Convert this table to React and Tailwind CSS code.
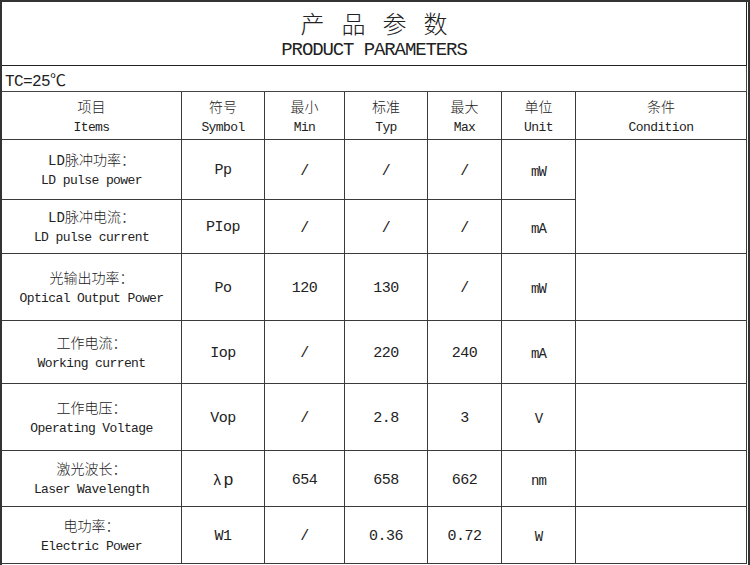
import React from "react";

const rows = [
	{ cn: "LD脉冲功率：", en: "LD pulse power", sym: "Pp", min: "/", typ: "/", max: "/", unit: "mW", h: "h-[60px]" },
	{ cn: "LD脉冲电流：", en: "LD pulse current", sym: "PIop", min: "/", typ: "/", max: "/", unit: "mA", h: "h-[54px]" },
	{ cn: "光输出功率：", en: "Optical Output Power", sym: "Po", min: "120", typ: "130", max: "/", unit: "mW", h: "h-[67px]" },
	{ cn: "工作电流：", en: "Working current", sym: "Iop", min: "/", typ: "220", max: "240", unit: "mA", h: "h-[63px]" },
	{ cn: "工作电压：", en: "Operating Voltage", sym: "Vop", min: "/", typ: "2.8", max: "3", unit: "V", h: "h-[67px]" },
	{ cn: "激光波长：", en: "Laser Wavelength", sym: "lambda", min: "654", typ: "658", max: "662", unit: "nm", h: "h-[56px]" },
	{ cn: "电功率：", en: "Electric Power", sym: "W1", min: "/", typ: "0.36", max: "0.72", unit: "W", h: "h-[57px]" },
];

const cell = "flex flex-col items-center justify-center border-r border-b border-[#3a3a3a] text-center";

const Symbol = ({ sym }) => {
	if (sym === "lambda") {
		return (
			<span className="flex items-baseline">
				<span className="text-[15px]">λ</span>
				<span className="font-['Liberation_Sans',sans-serif] text-[17px] ml-[2px]">p</span>
			</span>
		);
	}
	return <span className="text-[15px] tracking-[-0.5px]">{sym}</span>;
};

const App = () => {
	return (
		<div className="w-[750px] h-[565px] bg-white border-l-2 border-t-2 border-[#333] border-r-2 pr-px font-['Liberation_Mono','Noto_Sans_CJK_SC',monospace] text-[#222]">
			{/* title */}
			<div className="h-[64px] border-b border-r border-[#222] flex flex-col items-center justify-center pt-[3px]">
				<div className="flex gap-[17px] text-[24px] leading-[30px] font-['Noto_Sans_CJK_SC',sans-serif] font-light">
					<span>产</span>
					<span>品</span>
					<span>参</span>
					<span>数</span>
				</div>
				<div className="text-[19px] leading-[24px] tracking-[-1.1px]">PRODUCT PARAMETERS</div>
			</div>

			<div className="h-[26px] border-b border-r border-[#444] flex items-end pl-[3px] text-[16px] leading-[17px] tracking-[-0.6px]">
				TC=25℃
			</div>

			<div className="grid grid-cols-[180px_83px_80px_83px_74px_74px_171px]">
				{/* header */}
				{[
					["项目", "Items"],
					["符号", "Symbol"],
					["最小", "Min"],
					["标准", "Typ"],
					["最大", "Max"],
					["单位", "Unit"],
					["条件", "Condition"],
				].map(([cn, en]) => (
					<div key={en} className={`${cell} h-[48px] leading-[19px] pt-[4px]`}>
						<span className="text-[14px] font-light">{cn}</span>
						<span className="text-[13px] tracking-[-0.6px]">{en}</span>
					</div>
				))}

				{rows.map((r, i) => (
					<React.Fragment key={r.en}>
						<div className={`${cell} ${r.h} leading-[19px] pt-[3px]`}>
							<span className="text-[14px] font-light">{r.cn}</span>
							<span className="text-[13px] tracking-[-0.6px] whitespace-nowrap">{r.en}</span>
						</div>
						<div className={`${cell} ${r.h} pt-[4px]`}>
							<Symbol sym={r.sym} />
						</div>
						<div className={`${cell} ${r.h} pt-[5px] text-[15px] tracking-[-0.5px]`}>{r.min}</div>
						<div className={`${cell} ${r.h} pt-[5px] text-[15px] tracking-[-0.5px]`}>{r.typ}</div>
						<div className={`${cell} ${r.h} pt-[5px] text-[15px] tracking-[-0.5px]`}>{r.max}</div>
						<div className={`${cell} ${r.h} pt-[5px] text-[14px] tracking-[-1px]`}>{r.unit}</div>
						{i === 0 && <div className={`${cell} row-span-2`}></div>}
						{i > 1 && <div className={`${cell} ${r.h}`}></div>}
					</React.Fragment>
				))}
			</div>
		</div>
	);
};

export default App;
